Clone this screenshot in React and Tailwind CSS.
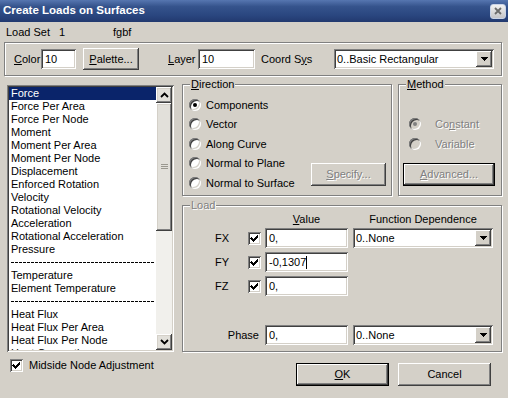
// Create Loads on Surfaces dialog (Windows classic look)
const sunken =
  "shadow-[inset_1px_1px_0_#808080,inset_-1px_-1px_0_#ffffff,inset_2px_2px_0_#404040,inset_-2px_-2px_0_#d4d0c8]";
const raised =
  "shadow-[inset_-1px_-1px_0_#404040,inset_1px_1px_0_#ffffff,inset_-2px_-2px_0_#808080,inset_2px_2px_0_#d4d0c8]";
const etched = "border border-[#808080] shadow-[inset_1px_1px_0_#ffffff,1px_1px_0_#ffffff]";
const dimText = "text-[#808080] [text-shadow:1px_1px_0_#ffffff]";

const loadTypes = [
  "Force",
  "Force Per Area",
  "Force Per Node",
  "Moment",
  "Moment Per Area",
  "Moment Per Node",
  "Displacement",
  "Enforced Rotation",
  "Velocity",
  "Rotational Velocity",
  "Acceleration",
  "Rotational Acceleration",
  "Pressure",
  "-",
  "Temperature",
  "Element Temperature",
  "-",
  "Heat Flux",
  "Heat Flux Per Area",
  "Heat Flux Per Node",
  "Heat Generation",
];

function Group({ label, dim, className = "", children }) {
  return (
    <div className={`relative ${etched} ${className}`}>
      <span
        className={`absolute -top-[7px] left-[7px] px-[1px] bg-[#D4D0C8] leading-[13px] ${dim ? dimText : ""}`}
      >
        {label}
      </span>
      {children}
    </div>
  );
}

function Field({ value, caret, className = "" }) {
  return (
    <div className={`bg-white h-[20px] flex items-center pl-[4px] ${sunken} ${className}`}>
      <span>{value}</span>
      {caret && <span className="w-[1px] h-[13px] bg-black" />}
    </div>
  );
}

function DropArrow() {
  return (
    <div className={`w-[16px] h-[16px] bg-[#D4D0C8] flex items-center justify-center ${raised}`}>
      <svg width="7" height="4" viewBox="0 0 7 4" shapeRendering="crispEdges">
        <path d="M0 0h7v1h-1v1h-1v1h-1v1h-1v-1h-1v-1h-1v-1h-1z" fill="#000" />
      </svg>
    </div>
  );
}

function Select({ value, className = "" }) {
  return (
    <div className={`bg-white h-[20px] flex items-center pl-[3px] pr-[2px] ${sunken} ${className}`}>
      <span className="flex-1">{value}</span>
      <DropArrow />
    </div>
  );
}

function Button({ children, def, dim, className = "" }) {
  const face = (
    <div
      className={`w-full h-full flex items-center justify-center bg-[#D4D0C8] ${raised} ${dim ? dimText : ""}`}
    >
      {children}
    </div>
  );
  return def ? (
    <div className={`border border-black ${className}`}>{face}</div>
  ) : (
    <div className={className}>{face}</div>
  );
}

function Check() {
  return (
    <div className={`w-[13px] h-[13px] bg-white shrink-0 ${sunken}`}>
      <svg width="13" height="13" viewBox="0 0 13 13" shapeRendering="crispEdges">
        <path
          d="M3 5h1v1h1v1h1v-1h1v-1h1v-1h1v-1h1v3h-1v1h-1v1h-1v1h-1v1h-1v-1h-1v-1h-1v-1h-1z"
          fill="#000"
        />
      </svg>
    </div>
  );
}

function Radio({ on, dim }) {
  return (
    <div
      className={`w-[12px] h-[12px] rounded-full shrink-0 flex items-center justify-center ${
        dim ? "bg-[#D4D0C8]" : "bg-white"
      } ${sunken}`}
    >
      {on && <div className={`w-[4px] h-[4px] rounded-full ${dim ? "bg-[#808080]" : "bg-black"}`} />}
    </div>
  );
}

function ScrollBtn({ up }) {
  return (
    <div className={`h-[16px] bg-[#E2E0DA] flex items-center justify-center ${raised}`}>
      <svg width="9" height="6" viewBox="0 0 9 6">
        <polyline
          points={up ? "1,5 4.5,1.5 8,5" : "1,1 4.5,4.5 8,1"}
          fill="none"
          stroke="#000"
          strokeWidth="1.8"
        />
      </svg>
    </div>
  );
}

export default function App() {
  return (
    <div className="w-[508px] h-[398px] bg-[#D4D0C8] overflow-hidden text-[11px] text-black font-['Liberation_Sans',Arial,sans-serif] flex flex-col">
      {/* title bar */}
      <div className="h-[22px] shrink-0 flex items-center justify-between pl-[3px] pr-[2px] bg-[linear-gradient(180deg,#5676B0_0%,#35538C_30%,#2A467F_70%,#22396F_100%)]">
        <span className="text-white font-bold text-[11.5px]">Create Loads on Surfaces</span>
        <div className="w-[16px] h-[15px] rounded-[3px] border border-[#C9D3E8] bg-gradient-to-b from-[#F2F2F2] to-[#C4C4C8] flex items-center justify-center">
          <svg width="8" height="8" viewBox="0 0 8 8">
            <path d="M1 1L7 7M7 1L1 7" stroke="#6B6B6B" strokeWidth="1.8" />
          </svg>
        </div>
      </div>

      {/* load set row */}
      <div className="h-[20px] shrink-0 flex items-center pl-[6px]">
        <span className="w-[53px]">Load Set</span>
        <span className="w-[54px]">1</span>
        <span>fgbf</span>
      </div>

      {/* color / layer / coord sys */}
      <div className={`ml-[4px] w-[498px] h-[34px] shrink-0 flex items-center ${etched}`}>
        <span className="ml-[9px] w-[27px]">
          <u>C</u>olor
        </span>
        <Field value="10" className="w-[35px]" />
        <Button className="ml-[7px] w-[56px] h-[22px]">
          <span>
            <u>P</u>alette...
          </span>
        </Button>
        <span className="ml-[29px] w-[30px]">
          <u>L</u>ayer
        </span>
        <Field value="10" className="w-[57px]" />
        <span className="ml-[6px] w-[73px]">
          Coord S<u>y</u>s
        </span>
        <Select value="0..Basic Rectangular" className="w-[160px]" />
      </div>

      <div className="flex mt-[8px]">
        {/* left column */}
        <div className="ml-[7px] w-[167px] flex flex-col">
          <div className={`mt-[1px] h-[267px] bg-white p-[2px] flex ${sunken}`}>
            <div className="flex-1 overflow-hidden">
              {loadTypes.map((t, i) =>
                t === "-" ? (
                  <div key={i} className="h-[13px] flex items-center pl-[2px]">
                    <div className="h-[1px] w-[144px] bg-[repeating-linear-gradient(90deg,#000_0_3px,transparent_3px_4px)]" />
                  </div>
                ) : (
                  <div
                    key={i}
                    className={`h-[13px] leading-[13px] pl-[2px] whitespace-nowrap ${
                      i === 0 ? "bg-[#0A246A] text-white" : ""
                    }`}
                  >
                    {t}
                  </div>
                )
              )}
            </div>
            <div className="w-[16px] flex flex-col bg-[#F1F0EC]">
              <ScrollBtn up />
              <div className={`h-[128px] bg-[#E2E0DA] flex items-center justify-center ${raised}`}>
                <svg width="7" height="6" viewBox="0 0 7 6" shapeRendering="crispEdges">
                  <path d="M0 0h7v1h-7zM0 2h7v1h-7zM0 4h7v1h-7z" fill="#9A988F" />
                </svg>
              </div>
              <div className="flex-1" />
              <ScrollBtn />
            </div>
          </div>
          <div className="mt-[7px] h-[13px] flex items-center">
            <div className="ml-[3px]">
              <Check />
            </div>
            <span className="ml-[6px]">Midside Node Adjustment</span>
          </div>
        </div>

        {/* right column */}
        <div className="ml-[8px] w-[320px] flex flex-col">
          <div className="flex h-[112px]">
            <Group label={<><u>D</u>irection</>} className="w-[210px] h-[112px] flex">
              <div className="pl-[6px] pt-[10px] flex flex-col">
                {["Components", "Vector", "Along Curve", "Normal to Plane", "Normal to Surface"].map((r, i) => (
                  <div key={r} className="h-[19.5px] flex items-center">
                    <Radio on={i === 0} />
                    <span className="ml-[5px]">{r}</span>
                  </div>
                ))}
              </div>
              <Button dim className="ml-auto self-end mr-[5px] mb-[9px] w-[75px] h-[23px]">
                <span>
                  <u>S</u>pecify...
                </span>
              </Button>
            </Group>
            <Group label={<><u>M</u>ethod</>} className="ml-[6px] w-[104px] h-[112px] flex flex-col">
              <div className="pl-[10px] pt-[29px] flex flex-col">
                <div className="h-[20px] flex items-center">
                  <Radio on dim />
                  <span className={`ml-[14px] ${dimText}`}>
                    Co<u>n</u>stant
                  </span>
                </div>
                <div className="h-[20px] flex items-center">
                  <Radio dim />
                  <span className={`ml-[14px] ${dimText}`}>Variable</span>
                </div>
              </div>
              <Button def dim className="mt-auto mb-[9px] ml-[4px] w-[92px] h-[23px]">
                <span>
                  <u>A</u>dvanced...
                </span>
              </Button>
            </Group>
          </div>

          <Group label="Load" dim className="mt-[9px] w-[320px] h-[147px] flex flex-col">
            <div className="pt-[7px] h-[20px] flex items-center">
              <span className="ml-[82px] w-[83px] text-center">
                <u>V</u>alue
              </span>
              <span className="ml-[5px] w-[140px] text-center">Function Dependence</span>
            </div>
            {[
              ["FX", "0,", true],
              ["FY", "-0,1307", false],
              ["FZ", "0,", false],
            ].map(([lbl, val, sel], i) => (
              <div key={lbl} className={`h-[20px] flex items-center ${i === 0 ? "mt-[2px]" : "mt-[4px]"}`}>
                <span className="ml-[32px] w-[33px]">{lbl}</span>
                <Check />
                <Field value={val} caret={lbl === "FY"} className="ml-[4px] w-[83px]" />
                {sel && <Select value="0..None" className="ml-[5px] w-[140px]" />}
              </div>
            ))}
            <div className="mt-[29px] h-[20px] flex items-center">
              <span className="w-[82px] text-right pr-[6px]">Phase</span>
              <Field value="0," className="w-[83px]" />
              <Select value="0..None" className="ml-[5px] w-[140px]" />
            </div>
          </Group>

          <div className="mt-[11px] flex">
            <Button def className="ml-[114px] w-[93px] h-[23px]">
              <span>
                <u>O</u>K
              </span>
            </Button>
            <Button className="ml-[9px] w-[93px] h-[23px]">Cancel</Button>
          </div>
        </div>
      </div>
    </div>
  );
}
